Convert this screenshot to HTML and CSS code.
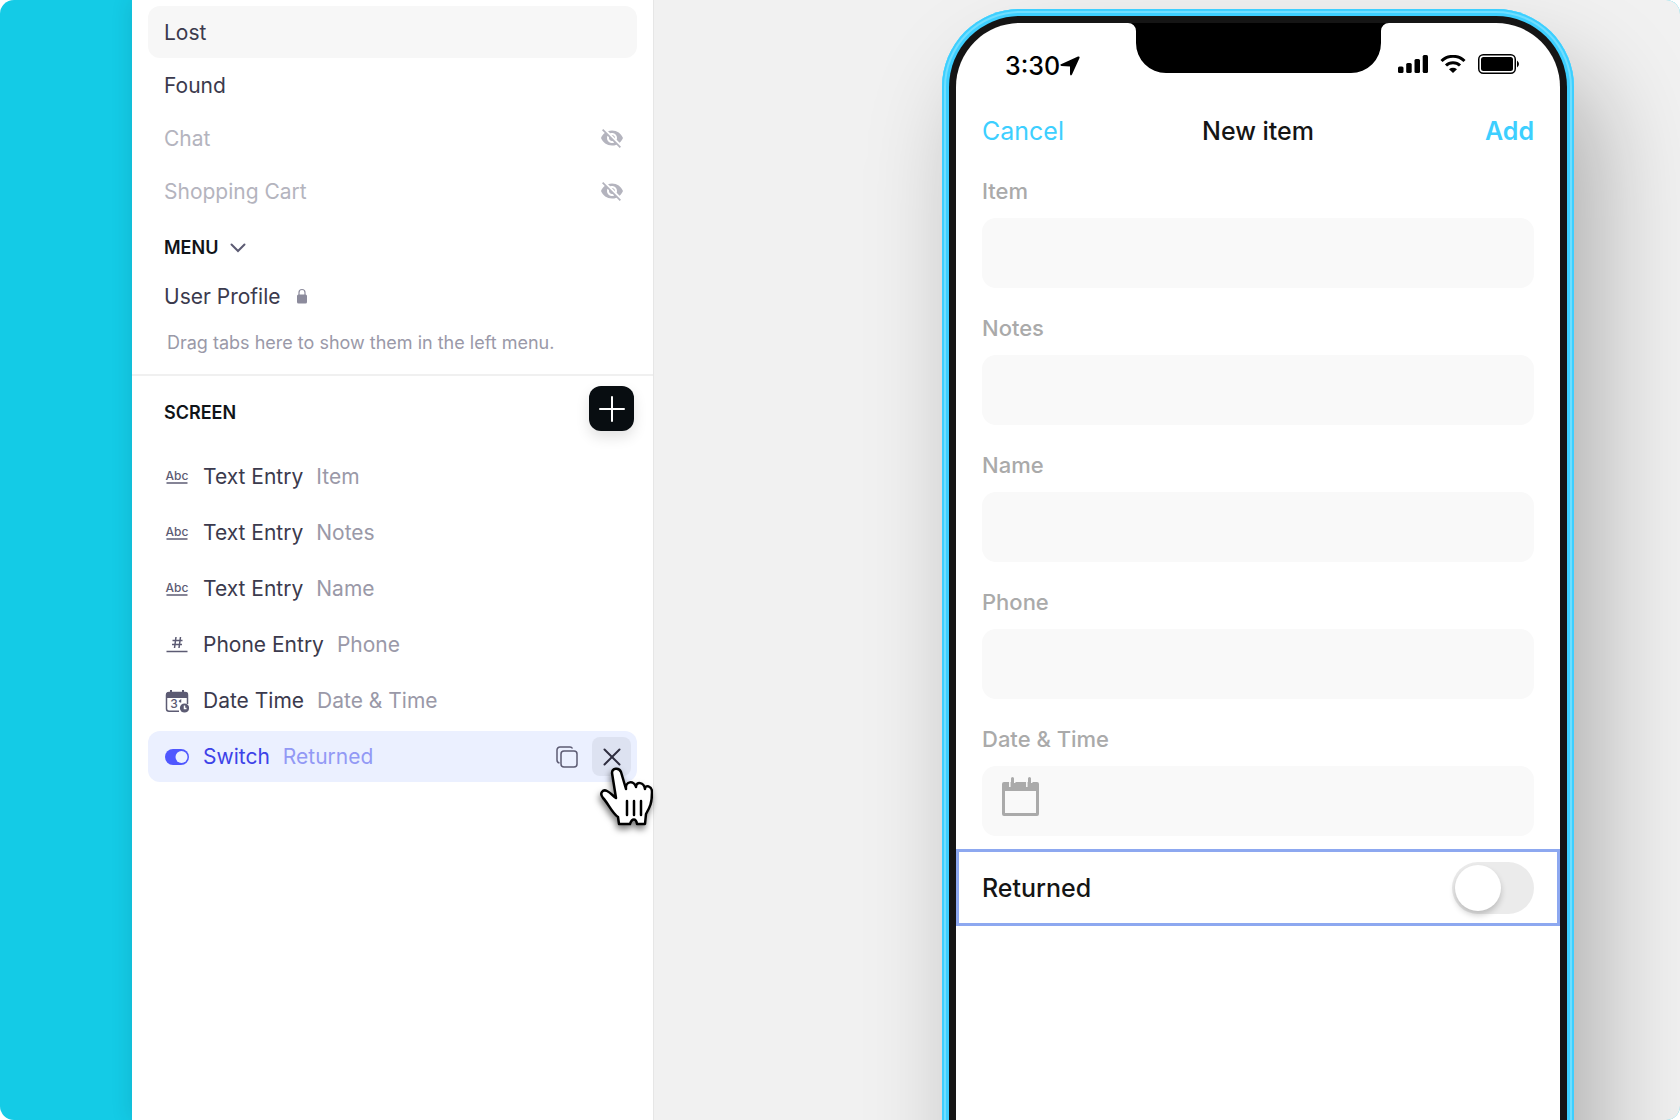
FILE: index.html
```html
<!DOCTYPE html>
<html lang="en">
<head>
  <meta charset="UTF-8">
  <meta name="viewport" content="width=device-width, initial-scale=1.0">
  <title>App builder</title>
  <link rel="stylesheet" href="styles.css">
</head>
<body>
  <!-- shared icons -->
  <svg class="sprite" aria-hidden="true">
    <symbol id="eye-off" viewBox="0 0 24 24">
      <path d="M12 7c2.76 0 5 2.24 5 5 0 .65-.13 1.26-.36 1.83l2.92 2.92c1.51-1.26 2.7-2.89 3.43-4.75-1.73-4.39-6-7.5-11-7.5-1.4 0-2.74.25-3.98.7l2.16 2.16C10.74 7.13 11.35 7 12 7zM2 4.27l2.28 2.28.46.46C3.08 8.3 1.78 10.02 1 12c1.73 4.39 6 7.5 11 7.5 1.55 0 3.03-.3 4.38-.84l.42.42L19.73 22 21 20.73 3.27 3 2 4.27zM7.53 9.8l1.55 1.55c-.05.21-.08.43-.08.65 0 1.66 1.34 3 3 3 .22 0 .44-.03.65-.08l1.55 1.55c-.67.33-1.41.53-2.2.53-2.76 0-5-2.24-5-5 0-.79.2-1.53.53-2.2zm4.31-.78l3.15 3.15.02-.16c0-1.66-1.34-3-3-3l-.17.01z"/>
    </symbol>
  </svg>

  <div class="app">
    <aside class="sidebar">
      <nav class="tabs">
        <a class="tab active" href="#lost">Lost</a>
        <a class="tab" href="#found">Found</a>
        <a class="tab muted" href="#chat">Chat <svg class="eye"><use href="#eye-off"/></svg></a>
        <a class="tab muted" href="#cart">Shopping Cart <svg class="eye"><use href="#eye-off"/></svg></a>
      </nav>

      <section class="menu">
        <button class="title">
          MENU
          <svg class="chevron" viewBox="0 0 16 10"><path d="M1.5 1.5L8 8l6.5-6.5"/></svg>
        </button>
        <a class="profile" href="#profile">
          User Profile
          <svg class="lock" viewBox="0 0 10 16"><rect y="6.5" width="10" height="9" rx="1.5"/><path d="M2 8V4.5a3 3 0 0 1 6 0V8" fill="none" stroke="currentColor" stroke-width="1.2"/></svg>
        </a>
        <p class="hint">Drag tabs here to show them in the left menu.</p>
      </section>

      <section class="screen-list">
        <header class="screen-head">
          <h2 class="title">SCREEN</h2>
          <button class="add" aria-label="Add component">
            <svg viewBox="0 0 26 26"><path d="M13 1v24M1 13h24"/></svg>
          </button>
        </header>
        <ul class="components">
          <li>
            <svg class="icon" viewBox="0 0 24 24"><text x="12" y="15" text-anchor="middle">Abc</text><path d="M1.5 18h21"/></svg>
            Text Entry <span>Item</span>
          </li>
          <li>
            <svg class="icon" viewBox="0 0 24 24"><text x="12" y="15" text-anchor="middle">Abc</text><path d="M1.5 18h21"/></svg>
            Text Entry <span>Notes</span>
          </li>
          <li>
            <svg class="icon" viewBox="0 0 24 24"><text x="12" y="15" text-anchor="middle">Abc</text><path d="M1.5 18h21"/></svg>
            Text Entry <span>Name</span>
          </li>
          <li>
            <svg class="icon" viewBox="0 0 24 24"><path d="M11 4L9.5 15M15.5 4L14 15M7.5 7.500h10M7 11.500h10M1.5 18.500h21"/></svg>
            Phone Entry <span>Phone</span>
          </li>
          <li>
            <svg class="icon" viewBox="0 0 24 24">
              <path d="M14 22.2H4a2.5 2.5 0 0 1-2.5-2.5V6A2.5 2.5 0 0 1 4 3.5h16A2.5 2.5 0 0 1 22.5 6v9" fill="none"/>
              <path d="M1 9V5.5A2.5 2.5 0 0 1 3.500 3H5V1h2v2h10V1h2v2h1.500A2.500 2.500 0 0 1 23 5.500V9z" stroke="none"/>
              <text x="9" y="18.5" text-anchor="middle">3</text>
              <path d="M14 12.5l1.500-1v2" fill="none"/>
              <circle cx="19.5" cy="19" r="4.6" stroke="none"/>
              <path d="M19.5 16.5V19.5H21.5" fill="none" stroke="#fff"/>
            </svg>
            Date Time <span>Date &amp; Time</span>
          </li>
          <li class="selected">
            <svg class="icon" viewBox="0 0 24 24"><rect y="4" width="24" height="16" rx="8" stroke="none"/><circle cx="16.5" cy="12" r="6" fill="#ebf0ff" stroke="none"/></svg>
            Switch <span>Returned</span>
            <button class="copy" aria-label="Duplicate">
              <svg viewBox="0 0 22 22"><rect x="5" y="5" width="16" height="16" rx="3"/><path d="M3.5 17A3 3 0 0 1 1 14V4a3 3 0 0 1 3-3h10a3 3 0 0 1 2.5 1.5"/></svg>
            </button>
            <button class="remove" aria-label="Remove">
              <svg viewBox="0 0 18 18"><path d="M1.5 1.5l15 15M16.5 1.5l-15 15"/></svg>
              <!-- hand pointer over the button -->
              <svg class="pointer" viewBox="0 0 54 60">
                <path d="M13 6C13 1 20 0 22 5L27 22C26 14 35 13 37 20C37 14 45 15 46 22C46 17 53 19 53 25C53 36 51 40 47 47L46 57H38C37 51 33 51 31 57H20L19 50C13 46 9 36 4 31C0 26 4 22 8 24C12 26 14 29 17 31Z"/>
                <path d="M28 34v14M35 34v14M42 34v14"/>
              </svg>
            </button>
          </li>
        </ul>
      </section>
    </aside>

    <main class="stage">
      <div class="phone">
        <div class="bezel">
          <div class="display">
            <div class="status">
              <div class="clock">
                3:30<svg class="arrow" viewBox="0 0 20 20"><path d="M1 8.2L18 .5Q20 0 19.5 2L12 18.5Q10.5 20.5 10 18V10.5L1.5 10Q-.5 9 1 8.2z"/></svg>
              </div>
              <svg class="notch" viewBox="0 0 261 50"><path d="M0 0H261A8 8 0 0 0 253 8V20A30 30 0 0 1 223 50H38A30 30 0 0 1 8 20V8A8 8 0 0 0 0 0z"/></svg>
              <div class="signals">
                <svg class="bars" viewBox="0 0 30 18"><rect y="11.5" width="5.5" height="6.5" rx="1.5"/><rect x="8.2" y="8" width="5.5" height="10" rx="1.5"/><rect x="16.5" y="4" width="5.5" height="14" rx="1.5"/><rect x="24.7" width="5.3" height="18" rx="1.5"/></svg>
                <svg class="wifi" viewBox="0 0 26 18"><path d="M1.5 6A16.5 16.5 0 0 1 24.5 6M6 10.5A10 10 0 0 1 20 10.5" fill="none" stroke="#000" stroke-width="3"/><path d="M9 14.2Q13 11.5 17 14.2L13 18z"/></svg>
                <svg class="battery" viewBox="0 0 42 20"><rect x=".75" y=".75" width="36.5" height="18.5" rx="4.5" fill="none" stroke="#000" stroke-width="1.5"/><rect x="3" y="3" width="32" height="14" rx="2.5"/><path d="M39 6.5Q43 10 39 13.5z"/></svg>
              </div>
            </div>

            <header class="bar">
              <button class="cancel">Cancel</button>
              <h1>New item</h1>
              <button class="done">Add</button>
            </header>

            <form class="form">
              <label for="item">Item</label>
              <input id="item" type="text">
              <label for="notes">Notes</label>
              <input id="notes" type="text">
              <label for="name">Name</label>
              <input id="name" type="text">
              <label for="phone">Phone</label>
              <input id="phone" type="tel">
              <label for="date">Date &amp; Time</label>
              <div class="date">
                <svg viewBox="0 0 37 39">
                  <path d="M2 5H35a2 2 0 0 1 2 2V37a2 2 0 0 1-2 2H2a2 2 0 0 1-2-2V7a2 2 0 0 1 2-2zM3 14V36H34V14z" fill-rule="evenodd"/>
                  <path d="M7.8 4v6M24.8 4v6M12.7 4v2M29.7 4v2" stroke="#f9f9f9" stroke-width="1.5"/>
                  <path d="M10.5 1.5v8M27.5 1.5v8" stroke="currentColor" stroke-width="3" stroke-linecap="round"/>
                </svg>
                <input id="date" type="text">
              </div>
            </form>

            <div class="returned">
              <label for="returned">Returned</label>
              <input id="returned" type="checkbox" role="switch">
            </div>
          </div>
        </div>
      </div>
    </main>
  </div>
</body>
</html>
```

FILE: styles.css
```css
* {
  box-sizing: border-box;
}

body {
  margin: 0;
  background: #fff;
  font-family: Inter, "Liberation Sans", sans-serif;
}

button {
  border: none;
  padding: 0;
  background: none;
  font: inherit;
  color: inherit;
  cursor: pointer;
}

a {
  color: inherit;
  text-decoration: none;
}

svg {
  flex-shrink: 0;
  fill: currentColor;
}

.sprite {
  position: absolute;
  width: 0;
  height: 0;
}

.app {
  display: flex;
  height: 100vh;
  padding-left: 132px;
  border-radius: 14px;
  background: #14cbe6;
  overflow: hidden;
}

/* sidebar */
.sidebar {
  flex: 0 0 521px;
  background: #fff;
  box-shadow: 0 0 20px rgba(0, 40, 60, .14);
  font-size: 21px;
  color: #3b3a4d;
}

.tabs {
  display: flex;
  flex-direction: column;
  gap: 1px;
  padding: 6px 16px 0;
}

.tab {
  display: flex;
  align-items: center;
  justify-content: space-between;
  height: 52px;
  padding: 0 13px 0 16px;
  border-radius: 12px;
}

.tab.active {
  background: #f7f7f7;
}

.tab.muted {
  color: #b4b4be;
}

.eye {
  width: 24px;
  height: 24px;
}

.menu {
  padding: 18px 32px 0;
  border-bottom: 2px solid #f0f0f0;
}

.title {
  display: flex;
  align-items: center;
  gap: 12px;
  margin: 0;
  font-size: 18px;
  font-weight: 600;
  line-height: 26px;
  color: #101418;
}

.chevron {
  width: 16px;
  height: 10px;
  fill: none;
  stroke: #5c5b73;
  stroke-width: 2;
  stroke-linecap: round;
}

.profile {
  display: flex;
  align-items: center;
  gap: 16px;
  height: 46px;
  margin-top: 12px;
}

.lock {
  width: 10px;
  height: 16px;
  color: #8c8b9c;
}

.hint {
  margin: 12px 0 19px 3px;
  font-size: 18px;
  line-height: 24px;
  color: #9a99a8;
}

.screen-head {
  display: flex;
  align-items: center;
  justify-content: space-between;
  padding: 10px 19px 0 32px;
}

.screen-head .title {
  padding-top: 8px;
}

.add {
  display: grid;
  place-items: center;
  width: 45px;
  height: 45px;
  border-radius: 12px;
  background: #080d11;
  box-shadow: 0 6px 14px rgba(0, 0, 0, .12);
}

.add svg {
  width: 26px;
  height: 26px;
  stroke: #fff;
  stroke-width: 2;
  stroke-linecap: round;
}

.components {
  display: flex;
  flex-direction: column;
  gap: 5px;
  margin: 0;
  padding: 20px 16px;
  list-style: none;
}

.components li {
  display: flex;
  align-items: center;
  height: 51px;
  padding: 0 6px 0 17px;
  border-radius: 12px;
}

.components span {
  margin-left: 13px;
  color: #9a99a8;
}

.icon {
  width: 24px;
  height: 24px;
  margin-right: 14px;
  color: #5c5b73;
  stroke: currentColor;
  stroke-width: 1.5;
}

.icon text {
  font-size: 12px;
  font-weight: 500;
  stroke: none;
}

.components .selected {
  background: #ebf0ff;
  color: #3d42e8;
}

.selected .icon {
  color: #4f57ff;
}

.components .selected span {
  color: #9299f5;
}

.copy {
  display: grid;
  margin-left: auto;
}

.copy svg {
  width: 22px;
  height: 22px;
  fill: none;
  stroke: #5c5b73;
  stroke-width: 1.5;
}

.remove {
  position: relative;
  display: grid;
  place-items: center;
  width: 39px;
  height: 39px;
  margin-left: 14px;
  border-radius: 8px;
  background: #dde2f1;
}

.remove svg {
  width: 18px;
  height: 18px;
  fill: none;
  stroke: #2f2e40;
  stroke-width: 2;
  stroke-linecap: round;
}

.remove .pointer {
  position: absolute;
  top: 30px;
  left: 7px;
  z-index: 1;
  width: 54px;
  height: 60px;
  fill: #fff;
  stroke: #000;
  stroke-width: 2.5;
  stroke-linejoin: round;
  filter: drop-shadow(-1px 4px 3px rgba(0, 0, 0, .5));
}

/* phone preview */
.stage {
  position: relative;
  flex: 1;
  display: flex;
  justify-content: flex-end;
  padding: 9px 106px 0 0;
  border-left: 1px solid #e6e6e6;
  background: #f1f1f1;
}

/* taller than the window, the bottom is cut off */
.phone {
  width: 632px;
  height: calc(100% + 180px);
  padding: 7px;
  border-radius: 78px;
  background: #3dcfff;
  box-shadow: inset 0 0 0 2px #3dcfff, inset 0 0 0 4px #70deff, 26px 60px 100px rgba(0, 0, 0, .28);
}

.bezel {
  height: 100%;
  padding: 7px;
  border-radius: 71px;
  background: #151515;
}

.display {
  height: 100%;
  border-radius: 64px;
  background: #fff;
  color: #151515;
  overflow: hidden;
}

.status {
  display: grid;
  grid-template-columns: 1fr 261px 1fr;
  height: 83px;
  color: #000;
}

.clock {
  display: flex;
  align-items: center;
  padding: 3px 0 0 49px;
  font-size: 25px;
  font-weight: 500;
}

.arrow {
  width: 20px;
  height: 20px;
}

.notch {
  width: 261px;
  height: 50px;
}

.signals {
  display: flex;
  align-items: center;
  justify-content: flex-end;
  gap: 12px;
  padding: 0 40px 2px 0;
}

.bars {
  width: 30px;
  height: 18px;
}

.wifi {
  width: 26px;
  height: 18px;
}

.battery {
  width: 42px;
  height: 20px;
}

.bar {
  display: grid;
  grid-template-columns: 1fr auto 1fr;
  align-items: center;
  height: 50px;
  padding: 0 26px;
  font-size: 25px;
}

.bar h1 {
  margin: 0;
  font-size: 25px;
  font-weight: 500;
}

.cancel {
  justify-self: start;
  color: #3dcfff;
}

.done {
  justify-self: end;
  font-weight: 600;
  color: #3dcfff;
}

.form {
  display: flex;
  flex-direction: column;
  padding: 19px 26px 13px;
}

.form label {
  margin-bottom: 11px;
  font-size: 22px;
  font-weight: 500;
  line-height: 32px;
  color: #aaa;
}

.form input {
  width: 100%;
  height: 70px;
  margin: 0 0 24px;
  padding: 0 20px;
  border: none;
  border-radius: 14px;
  background: #f9f9f9;
  font: inherit;
  font-size: 24px;
}

.date {
  display: flex;
  align-items: flex-start;
  padding-left: 20px;
  border-radius: 14px;
  background: #f9f9f9;
}

.date svg {
  width: 37px;
  height: 39px;
  margin-top: 11px;
  color: #aaa;
}

.form .date input {
  margin: 0;
  background: none;
}

.returned {
  display: flex;
  align-items: center;
  justify-content: space-between;
  height: 77px;
  padding: 0 23px;
  border: 3px solid #8da8f0;
  font-size: 25px;
  font-weight: 500;
}

.returned input {
  appearance: none;
  display: flex;
  align-items: center;
  width: 82px;
  height: 52px;
  margin: 0;
  padding: 3px;
  border-radius: 26px;
  background: #ebebeb;
}

.returned input::before {
  content: '';
  width: 46px;
  height: 46px;
  border-radius: 50%;
  background: #fff;
  box-shadow: 0 4px 6px rgba(0, 0, 0, .2);
}

.returned input:checked {
  justify-content: flex-end;
  background: #3dcfff;
}
```
